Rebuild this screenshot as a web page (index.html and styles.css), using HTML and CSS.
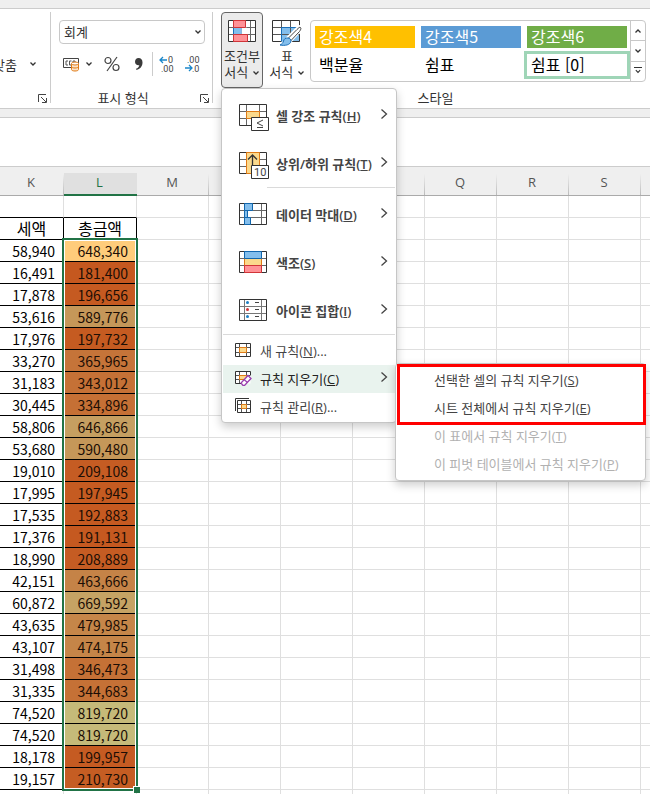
FILE: index.html
```html
<!DOCTYPE html>
<html lang="ko">
<head>
    <meta charset="utf-8">
    <title>조건부 서식</title>
    <meta name="viewport" content="width=device-width, initial-scale=1.0">
    <link rel="stylesheet" href="styles.css">
</head>
<body>
    <svg class="defs" width="0" height="0">
        <symbol id="down" viewBox="0 0 8 8"><path d="M1.5 2.5L4 5l2.5-2.5" fill="none" stroke="#333" stroke-width="1.3"/></symbol>
        <symbol id="up" viewBox="0 0 8 8"><path d="M1.5 5.5L4 3l2.5 2.5" fill="none" stroke="#333" stroke-width="1.3"/></symbol>
        <symbol id="right" viewBox="0 0 8 12"><path d="M1.5 1.5L6.5 6l-5 4.500" fill="none" stroke="#444" stroke-width="1.3"/></symbol>
        <symbol id="launcher" viewBox="0 0 9 9"><path d="M.5 8V.5H8M3 3l5 5M8.500 4v4.500H4" fill="none" stroke="#444"/></symbol>
    </svg>

    <div class="topbar"></div>
    <header class="ribbon">
        <section class="group align-group">
            <div class="group-body">
                <button class="tool align">맞춤 <svg class="caret"><use href="#down"/></svg></button>
            </div>
            <button class="launcher" aria-label="맞춤 설정"><svg><use href="#launcher"/></svg></button>
        </section>

        <section class="group number-group">
            <div class="group-body">
                <div class="select">
                    <select aria-label="표시 형식">
                        <option>회계</option>
                        <option>일반</option>
                        <option>숫자</option>
                    </select>
                    <svg class="caret"><use href="#down"/></svg>
                </div>
                <div class="tools">
                    <button class="tool" aria-label="회계 표시 형식">
                        <svg width="17" height="16" viewBox="0 0 17 16" fill="none">
                            <path d="M.5 2.500h15v9H.5z" stroke="#444"/>
                            <path d="M5 5H3v4h2M8.500 5H6.500v4h2M10 9V5h2v4" stroke="#555"/>
                            <path d="M8.500 7.500v6c0 2 7 2 7 0v-6" fill="#fce3c8" stroke="#e07b16"/>
                            <ellipse cx="12" cy="7.500" rx="3.500" ry="1.500" fill="#fff" stroke="#e07b16"/>
                            <path d="M8.500 10.500c0 2 7 2 7 0" stroke="#e07b16"/>
                        </svg>
                        <svg class="caret"><use href="#down"/></svg>
                    </button>
                    <button class="tool percent" aria-label="백분율 스타일">
                        <svg width="16" height="16" viewBox="0 0 16 16" fill="none" stroke="#444" stroke-width="1.200">
                            <circle cx="4" cy="4.500" r="3"/><circle cx="12" cy="11.500" r="3"/><path d="M13 1L3 15"/>
                        </svg>
                    </button>
                    <button class="tool comma" aria-label="쉼표 스타일">
                        <svg width="10" height="14" viewBox="0 0 10 14"><path d="M4.500 1C7 1 8.500 2.600 8.500 5.500c0 4-2.500 6.500-6 7.500l-.5-1.200c2-.8 3.200-2 3.300-3.600C2.800 8.600 1 7 1 4.700 1 2.500 2.500 1 4.500 1z" fill="#3b3b3b"/></svg>
                    </button>
                    <span class="rule"></span>
                    <button class="tool decimal" aria-label="자릿수 늘림">
                        <svg width="18" height="18" viewBox="0 0 18 18">
                            <path d="M9 5H2M5 2L2 5l3 3" fill="none" stroke="#1b87c9" stroke-width="1.300"/>
                            <text x="10" y="8">0</text><text x="3" y="17">.00</text>
                        </svg>
                    </button>
                    <button class="tool decimal" aria-label="자릿수 줄임">
                        <svg width="18" height="18" viewBox="0 0 18 18">
                            <text x="3" y="8">.00</text><text x="8" y="17">.0</text>
                            <path d="M1 13h7M5 10l3 3-3 3" fill="none" stroke="#1b87c9" stroke-width="1.300"/>
                        </svg>
                    </button>
                </div>
            </div>
            <div class="caption">표시 형식</div>
            <button class="launcher" aria-label="표시 형식 설정"><svg><use href="#launcher"/></svg></button>
        </section>

        <section class="group style-group">
            <div class="group-body">
                <div class="dropdown">
                    <button class="big-btn open">
                        <svg width="30" height="26" viewBox="0 0 30 26">
                            <path d="M1.500.5h27v21h-27z" fill="#fff"/>
                            <path d="M1.500 7.500h27M1.500 14.500h27M6.500.5v21M18.500.5v21M23.500.5v21" fill="none" stroke="#666"/>
                            <path d="M6.500 7.500h8v7h-8z" fill="#83beec" stroke="#1a6fb8"/>
                            <path d="M14.500 7.500h5v7h-5z" fill="#fff"/>
                            <path d="M1.500.5h27v21h-27z" fill="none" stroke="#333"/>
                            <path d="M6.500.5h12v7h-12zM6.500 14.500h14v7h-14z" fill="#ff9297" stroke="#d13438"/>
                        </svg>
                        <span>조건부</span>
                        <span>서식 <svg class="caret"><use href="#down"/></svg></span>
                    </button>

                    <ul class="menu">
                        <li><button class="item large">
                            <svg width="30" height="28" viewBox="0 0 30 28">
                                <path d="M.5.5h27v21H.5z" fill="#fff"/>
                                <path d="M.5 7.500h27M.5 14.500h27M7.500.5v21M20.500.5v21" stroke="#666"/>
                                <path d="M.5.5h27v21H.5z" fill="none" stroke="#333"/>
                                <path d="M7.500 7.500h13v7h-13z" fill="#fbd98c" stroke="#e07b16"/>
                                <path d="M12.500 13.500h17v13h-17z" fill="#fff" stroke="#333"/>
                                <path d="M24 16l-6 3 6 3M18 23.500h6" fill="none" stroke="#444"/>
                            </svg>
                            <span>셀 강조 규칙(<u>H</u>)</span><svg class="arrow"><use href="#right"/></svg>
                        </button></li>
                        <li><button class="item large">
                            <svg width="30" height="28" viewBox="0 0 30 28">
                                <path d="M.5.5h27v21H.5z" fill="#fff"/>
                                <path d="M.5 7.500h27M.5 14.500h27M20.500.5v21" stroke="#666"/>
                                <path d="M.5.5h27v21H.5z" fill="none" stroke="#333"/>
                                <path d="M7.500.5h13v21h-13z" fill="#fbd98c" stroke="#e07b16"/>
                                <path d="M13.500 13V3M9 7.500L13.500 3 18 7.500" fill="none" stroke="#333" stroke-width="1.300"/>
                                <path d="M12.500 13.500h17v13h-17z" fill="#fff" stroke="#333"/>
                                <text class="ten" x="15" y="24">10</text>
                            </svg>
                            <span>상위/하위 규칙(<u>T</u>)</span><svg class="arrow"><use href="#right"/></svg>
                        </button></li>
                        <li class="sep indent"></li>
                        <li><button class="item large">
                            <svg width="30" height="28" viewBox="0 0 30 28">
                                <path d="M.5.5h27v21H.5z" fill="#fff"/>
                                <path d="M.5 7.500h27M.5 14.500h27M5.500.5v21M22.500.5v21" stroke="#666"/>
                                <path d="M.5.5h27v21H.5z" fill="none" stroke="#333"/>
                                <path d="M5.500.5h8v7h-8zM5.500 7.500h3v7h-3zM5.500 14.500h6v7h-6z" fill="#83beec" stroke="#1166ad"/>
                            </svg>
                            <span>데이터 막대(<u>D</u>)</span><svg class="arrow"><use href="#right"/></svg>
                        </button></li>
                        <li><button class="item large">
                            <svg width="30" height="28" viewBox="0 0 30 28">
                                <path d="M.5.5h27v21H.5z" fill="#fff"/>
                                <path d="M.5 7.500h27M.5 14.500h27" stroke="#666"/>
                                <path d="M.5.5h27v21H.5z" fill="none" stroke="#333"/>
                                <path d="M5.500 7.500h17v7h-17z" fill="#fbd98c" stroke="#e07b16"/>
                                <path d="M5.500.5h17v7h-17z" fill="#83beec" stroke="#1166ad"/>
                                <path d="M5.500 14.500h17v7h-17z" fill="#ff9297" stroke="#d13438"/>
                            </svg>
                            <span>색조(<u>S</u>)</span><svg class="arrow"><use href="#right"/></svg>
                        </button></li>
                        <li><button class="item large">
                            <svg width="30" height="28" viewBox="0 0 30 28">
                                <path d="M.5.5h27v21H.5z" fill="#fff"/>
                                <path d="M.5 7.500h27M.5 14.500h27M5.500.5v21M22.500.5v21" stroke="#777"/>
                                <path d="M.5.5h27v21H.5z" fill="none" stroke="#333"/>
                                <path d="M16 3.500h4M16 10.500h4M16 17.500h4" stroke="#444"/>
                                <circle cx="8.500" cy="3.500" r="1.500" fill="#1b7fc4"/>
                                <circle cx="8.500" cy="10.500" r="1.500" fill="#d13438"/>
                                <circle cx="8.500" cy="17.500" r="1.500" fill="#1b7fc4"/>
                            </svg>
                            <span>아이콘 집합(<u>I</u>)</span><svg class="arrow"><use href="#right"/></svg>
                        </button></li>
                        <li class="sep"></li>
                        <li><button class="item">
                            <svg width="17" height="16" viewBox="0 0 17 16">
                                <path d="M.5 1.500h15v13H.5z" fill="#fff"/>
                                <path d="M.5 5.500h15M.5 10.500h15M4.500 1.500v13M11.500 1.500v13" stroke="#555"/>
                                <path d="M.5 1.500h15v13H.5z" fill="none" stroke="#333"/>
                                <path d="M4.500 5.500h7v5h-7z" fill="#fbd98c" stroke="#e07b16"/>
                            </svg>
                            <span>새 규칙(<u>N</u>)...</span>
                        </button></li>
                        <li class="has-sub">
                            <button class="item active">
                                <svg width="17" height="16" viewBox="0 0 17 16">
                                    <path d="M.5 1.500h15v12H.5z" fill="#fff"/>
                                    <path d="M.5 5.500h15M.5 9.500h15M4.500 1.500v12M11.500 1.500v12" stroke="#555"/>
                                    <path d="M4.500 5.500h7v4h-7z" fill="#fbd98c" stroke="#e07b16"/>
                                    <path d="M8 13.500H.5v-12h15V5" fill="none" stroke="#333"/>
                                    <path d="M13 5.500l3 3-6.500 7H8L6 13z" fill="#fff" stroke="#9b3fb0" stroke-width="1.300"/>
                                    <path d="M9 9.500l3.500 3" stroke="#9b3fb0" stroke-width="1.300"/>
                                </svg>
                                <span>규칙 지우기(<u>C</u>)</span><svg class="arrow"><use href="#right"/></svg>
                            </button>
                            <ul class="menu submenu">
                                <li><button class="item">선택한 셀의 규칙 지우기(<u>S</u>)</button></li>
                                <li><button class="item">시트 전체에서 규칙 지우기(<u>E</u>)</button></li>
                                <li><button class="item" disabled>이 표에서 규칙 지우기(<u>T</u>)</button></li>
                                <li><button class="item" disabled>이 피벗 테이블에서 규칙 지우기(<u>P</u>)</button></li>
                                <li class="mark"></li>
                            </ul>
                        </li>
                        <li><button class="item">
                            <svg width="17" height="16" viewBox="0 0 17 16">
                                <path d="M.5 13V.5H14" fill="none" stroke="#333"/>
                                <path d="M2.500 2.500h13v12h-13z" fill="#fff"/>
                                <path d="M2.500 6.500h13M2.500 10.500h13M6.500 2.500v12M11.500 2.500v12" stroke="#555"/>
                                <path d="M2.500 2.500h13v12h-13z" fill="none" stroke="#333"/>
                                <path d="M6.500 6.500h5v4h-5z" fill="#fbd98c" stroke="#e07b16"/>
                            </svg>
                            <span>규칙 관리(<u>R</u>)...</span>
                        </button></li>
                    </ul>
                </div>

                <button class="big-btn">
                    <svg width="30" height="26" viewBox="0 0 30 26">
                        <path d="M.5.5h27v21H.5z" fill="#fff"/>
                        <path d="M9.500 7.500h18v14h-18z" fill="#83beec"/>
                        <path d="M.5 7.500h27M.5 14.500h27M9.500.5v21M18.500.5v21" stroke="#555"/>
                        <path d="M9.500 21.500v-14h18" fill="none" stroke="#1a6fb8"/>
                        <path d="M9 21.500H.5V.5h27V8M27.500 14v7.500H20" fill="none" stroke="#333"/>
                        <path d="M29 6.500c1 1 0 2.500-1 4L19 20.500l-3-3 9-9c1.500-1.500 3-3 4-2z" fill="#fff" stroke="#fff" stroke-width="3"/>
                        <path d="M28.500 7.500c1 .8 0 2.500-1 4L19 20.500l-2.500-2.500 8.500-8.500c1.500-1.500 2.700-2.700 3.500-2z" fill="#fff" stroke="#444"/>
                        <path d="M16 18c2 .3 3 1.500 3 3-.5 4-6 5-11 4 2-1 3-2 3.500-4 .5-2 2-3.300 4.500-3z" fill="#83beec" stroke="#1a6fb8"/>
                    </svg>
                    <span>표</span>
                    <span>서식 <svg class="caret"><use href="#down"/></svg></span>
                </button>

                <div class="gallery">
                    <div class="styles">
                        <button class="style accent4">강조색4</button>
                        <button class="style accent5">강조색5</button>
                        <button class="style accent6">강조색6</button>
                        <button class="style">백분율</button>
                        <button class="style">쉼표</button>
                        <button class="style picked">쉼표 [0]</button>
                    </div>
                    <div class="scroll">
                        <button aria-label="위로"><svg class="caret"><use href="#up"/></svg></button>
                        <button aria-label="아래로"><svg class="caret"><use href="#down"/></svg></button>
                        <button class="more" aria-label="자세히"><svg class="caret"><use href="#down"/></svg></button>
                    </div>
                </div>
            </div>
            <div class="caption">스타일</div>
        </section>
    </header>
    <div class="divider"></div>
    <div class="formula-bar"></div>

    <main class="sheet">
        <table>
            <colgroup>
                <col class="col-k"><col class="col-l">
                <col class="col"><col class="col"><col class="col"><col class="col">
                <col class="col"><col class="col"><col class="col"><col>
            </colgroup>
            <thead>
                <tr>
                    <th>K</th><th class="current">L</th><th>M</th><th>N</th><th>O</th>
                    <th>P</th><th>Q</th><th>R</th><th>S</th><th class="last"></th>
                </tr>
            </thead>
            <tbody id="rows"></tbody>
        </table>
        <div class="selection"></div>
    </main>

    <script>
        const data = [
            [58940, 648340], [16491, 181400], [17878, 196656], [53616, 589776], [17976, 197732],
            [33270, 365965], [31183, 343012], [30445, 334896], [58806, 646866], [53680, 590480],
            [19010, 209108], [17995, 197945], [17535, 192883], [17376, 191131], [18990, 208889],
            [42151, 463666], [60872, 669592], [43635, 479985], [43107, 474175], [31498, 346473],
            [31335, 344683], [74520, 819720], [74520, 819720], [18178, 199957], [19157, 210730]
        ]
        const totals = data.map(row => row[1])
        const min = Math.min(...totals)
        const max = Math.max(...totals)
        const empty = "<td></td>".repeat(7) + `<td class="last"></td>`

        // colour scale, low = orange, high = olive
        function scale(value) {
            const t = (value - min) / (max - min)
            return `rgb(197, ${Math.round(88 + t * 98)}, ${Math.round(31 + t * 90)})`
        }

        let html = `<tr class="blank"><td></td><td></td>${empty}</tr>`
        html += `<tr class="title"><td>세액</td><td>총금액</td>${empty}</tr>`
        data.forEach(([tax, total], i) => {
            const fill = i == 0 ? `class="total first"` : `class="total" style="background-color: ${scale(total)}"`
            html += `<tr><td class="tax">${tax.toLocaleString("en-US")}</td><td ${fill}>${total.toLocaleString("en-US")}</td>${empty}</tr>`
        })
        html += `<tr><td></td><td></td>${empty}</tr>`
        document.getElementById("rows").innerHTML = html
    </script>
</body>
</html>
```
FILE: styles.css
```css
* {
    box-sizing: border-box;
}
html {
    height: 100%;
}
body {
    margin: 0;
    height: 100%;
    overflow: hidden;
    display: flex;
    flex-direction: column;
    background-color: #fff;
    color: #333;
    font-family: "Open Sans", "Noto Sans CJK KR", sans-serif;
    font-size: 13px;
}
button, select {
    font: inherit;
    color: inherit;
    background: none;
    border: none;
    margin: 0;
    padding: 0;
}
svg {
    flex: none;
}
svg text {
    font-family: Roboto, sans-serif;
    font-size: 9px;
    fill: #444;
}
svg .ten {
    font-size: 11px;
    font-weight: 400;
}
ul {
    list-style: none;
    margin: 0;
    padding: 0;
}
.defs {
    position: absolute;
}
.caret {
    width: 8px;
    height: 8px;
}
.topbar {
    flex: none;
    height: 9px;
    background-color: #efefef;
    border-bottom: 1px solid #ccc;
}

/* ribbon */
.ribbon {
    flex: none;
    display: flex;
    height: 99px;
    padding: 3px 0 5px;
}
.group {
    position: relative;
    display: flex;
    flex-direction: column;
    border-right: 1px solid #ccc;
}
.group-body {
    flex: 1;
}
.caption {
    height: 14px;
    line-height: 18px;
    text-align: center;
}
.launcher {
    position: absolute;
    right: 3px;
    bottom: 0;
    width: 9px;
    height: 9px;
    display: flex;
}
.launcher svg {
    width: 9px;
    height: 9px;
}
.align-group {
    width: 51px;
}
.align-group .group-body {
    display: flex;
    justify-content: flex-end;
    padding: 40px 13px 0 0;
}
.align {
    gap: 12px;
    white-space: nowrap;
}
.tool {
    display: flex;
    align-items: center;
    height: 24px;
}
.number-group {
    width: 162px;
    padding-left: 8px;
}
.number-group .caption {
    padding-right: 25px;
}
.select {
    position: relative;
    margin: 8px 7px 0 0;
}
.select select {
    appearance: none;
    display: block;
    width: 100%;
    height: 24px;
    padding: 0 4px;
    border: 1px solid #c8c8c8;
    border-radius: 4px;
    background-color: #fff;
}
.select .caret {
    position: absolute;
    right: 3px;
    top: 8px;
}
.tools {
    display: flex;
    align-items: center;
    margin-top: 8px;
    padding-left: 4px;
}
.tools .tool .caret {
    margin-left: 5px;
}
.percent {
    margin-left: 11px;
}
.comma {
    margin-left: 14px;
}
.rule {
    width: 1px;
    height: 24px;
    margin-left: 8px;
    background-color: #ccc;
}
.decimal {
    margin-left: 5px;
}
.decimal + .decimal {
    margin-left: 8px;
}
.style-group {
    flex: 1;
    border-right: none;
    padding-left: 8px;
}
.style-group .group-body {
    display: flex;
    align-items: flex-start;
}
.dropdown {
    position: relative;
}
.big-btn {
    display: flex;
    flex-direction: column;
    align-items: center;
    width: 42px;
    height: 76px;
    padding-top: 7px;
    border: 1px solid transparent;
    border-radius: 4px;
    line-height: 16px;
    white-space: nowrap;
}
.dropdown + .big-btn {
    margin: 0 2px 0 3px;
}
.big-btn > svg {
    margin-bottom: 2px;
}
.big-btn.open {
    background-color: #ebebeb;
    border-color: #666;
}
.gallery {
    flex: 1;
    display: flex;
    height: 62px;
    margin: 8px 4px 0 0;
    border: 1px solid #c8c8c8;
    border-radius: 4px;
}
.styles {
    flex: 1;
    display: grid;
    grid-template-columns: repeat(3, 1fr);
    grid-template-rows: 28px 28px;
    padding: 2px 0 0 1px;
}
.style {
    margin: 3px;
    padding: 0 4px 3px;
    text-align: left;
    font-family: "Noto Sans CJK KR", sans-serif;
    font-size: 16px;
    line-height: 20px;
    color: #000;
    white-space: nowrap;
}
.accent4, .accent5, .accent6 {
    color: #fff;
}
.accent4 {
    background-color: #ffc000;
}
.accent5 {
    background-color: #5b9bd5;
}
.accent6 {
    background-color: #70ad47;
}
.style.picked {
    margin: 0;
    border: 3px solid #9fd5b7;
}
.scroll {
    width: 15px;
    display: flex;
    flex-direction: column;
    border-left: 1px solid #c8c8c8;
}
.scroll button {
    flex: 1;
    display: flex;
    align-items: center;
    justify-content: center;
    border-bottom: 1px solid #c8c8c8;
}
.scroll .more {
    border-bottom: none;
}
.more .caret {
    border-top: 1px solid #333;
}

/* menus */
.menu {
    position: absolute;
    z-index: 2;
    top: 100%;
    left: 0;
    width: 176px;
    padding: 2px 1px 1px;
    background-color: #fff;
    border: 1px solid #c6c6c6;
    border-radius: 4px;
    box-shadow: 0 4px 10px rgba(0, 0, 0, 0.2);
}
.item {
    display: flex;
    align-items: center;
    width: 100%;
    height: 28px;
    padding: 0 7px 2px 12px;
    color: #444;
    text-align: left;
    white-space: nowrap;
}
.item > span {
    flex: 1;
    margin-left: 8px;
}
.item.large {
    height: 48px;
    padding: 0 7px 0 16px;
    font-weight: 600;
}
.item.large > span {
    margin-left: 7px;
}
.item.large > svg:first-child {
    margin-top: 5px;
}
.item .arrow {
    width: 8px;
    height: 12px;
    margin-bottom: 2px;
}
.item.active {
    background-color: #e9f3ee;
    color: #222;
}
.item:disabled {
    color: #b1b1b1;
}
.sep {
    height: 1px;
    margin-bottom: 2px;
    background-color: #dadada;
}
.sep.indent {
    margin-left: 44px;
}
.has-sub {
    position: relative;
}
.submenu {
    top: -2px;
    left: 100%;
    width: 251px;
    padding: 2px 0;
}
.submenu .item {
    display: block;
    padding-left: 38px;
}
.mark {
    position: absolute;
    top: 0;
    left: 1px;
    right: -1px;
    height: 61px;
    border: 3px solid #f00;
}

/* sheet */
.divider {
    flex: none;
    height: 10px;
    background-color: #efefef;
    border-top: 1px solid #ccc;
    border-bottom: 1px solid #ccc;
}
.formula-bar {
    flex: none;
    height: 49px;
    border-bottom: 1px solid #ccc;
}
.sheet {
    position: relative;
}
table {
    width: 100%;
    table-layout: fixed;
    border-collapse: separate;
    border-spacing: 0;
}
.col-k {
    width: 64px;
}
.col-l {
    width: 73px;
}
.col {
    width: 72px;
}
th {
    height: 29px;
    padding: 2px 2px 0 0;
    font-weight: 400;
    line-height: 20px;
    color: #555;
    background: linear-gradient(#efefef, #bbb) right bottom / 1px 21px no-repeat #efefef;
    border-bottom: 1px solid #aaa;
}
th.current {
    color: #217346;
    background: linear-gradient(#e0e0e0, #e0e0e0) left bottom / 100% 21px no-repeat #efefef;
    border-bottom: 2px solid #217346;
}
td {
    height: 22px;
    padding: 0;
    border-right: 1px solid #dfdfdf;
    border-bottom: 1px solid #dfdfdf;
    font-family: "Noto Sans CJK KR", sans-serif;
    line-height: 20px;
    color: #000;
    text-align: right;
    white-space: nowrap;
}
td.last {
    border-right: none;
}
th.last {
    background: #efefef;
}
.blank td:nth-child(-n+2) {
    border-bottom-color: #000;
}
.title td:nth-child(-n+2) {
    padding-bottom: 1px;
    border-color: #000;
    font-size: 16px;
    text-align: center;
}
.tax, .total {
    padding-right: 8px;
    border-color: #000;
    font-size: 14px;
}
.total {
    color: #1c0e05;
}
.total.first {
    background-color: #ffcc7b;
}
.selection {
    position: absolute;
    top: 71px;
    left: 62px;
    width: 76px;
    height: 553px;
    border: 2px solid #217346;
    box-shadow: inset 0 0 0 1px #fff;
}
.selection::after {
    content: "";
    position: absolute;
    right: -4px;
    bottom: -4px;
    width: 6px;
    height: 6px;
    background-color: #217346;
    border-top: 1px solid #fff;
    border-left: 1px solid #fff;
}
```
